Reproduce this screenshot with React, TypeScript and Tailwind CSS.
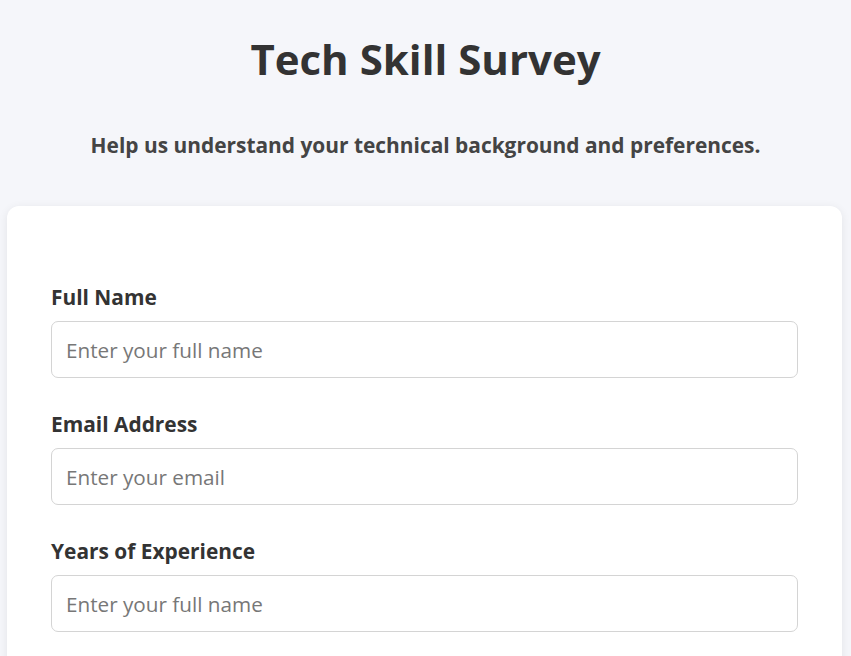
import React from 'react';

const fields = [
  { label: 'Full Name', placeholder: 'Enter your full name', type: 'text' },
  { label: 'Email Address', placeholder: 'Enter your email', type: 'email' },
  { label: 'Years of Experience', placeholder: 'Enter your full name', type: 'text' },
];

export default function App() {
  return (
    <div className="min-h-screen bg-[#f5f6fa] text-[#333] font-['Open_Sans',sans-serif]">
      <header className="pt-[29px] text-center">
        <h1 className="text-[42px] font-bold leading-[60px]">Tech Skill Survey</h1>
        <p className="mt-[41px] text-[20.9px] font-bold leading-[30px] text-[#444]">
          Help us understand your technical background and preferences.
        </p>
      </header>
      <main className="ml-[7px] mr-[9px] mt-[46px] rounded-[12px] bg-white px-[44px] pt-[77px] pb-[40px] shadow-[0_2px_10px_rgba(0,0,0,0.08)]">
        <form className="flex flex-col gap-[32px]">
          {fields.map((f) => (
            <div key={f.label}>
              <label className="mb-[10px] block text-[20.9px] font-bold leading-[28px]">{f.label}</label>
              <input
                type={f.type}
                placeholder={f.placeholder}
                className="h-[57px] w-full rounded-[7px] border border-[#d4d4d4] bg-white px-[14px] text-[20.7px] placeholder:text-[#777] outline-none"
              />
            </div>
          ))}
        </form>
      </main>
    </div>
  );
}
